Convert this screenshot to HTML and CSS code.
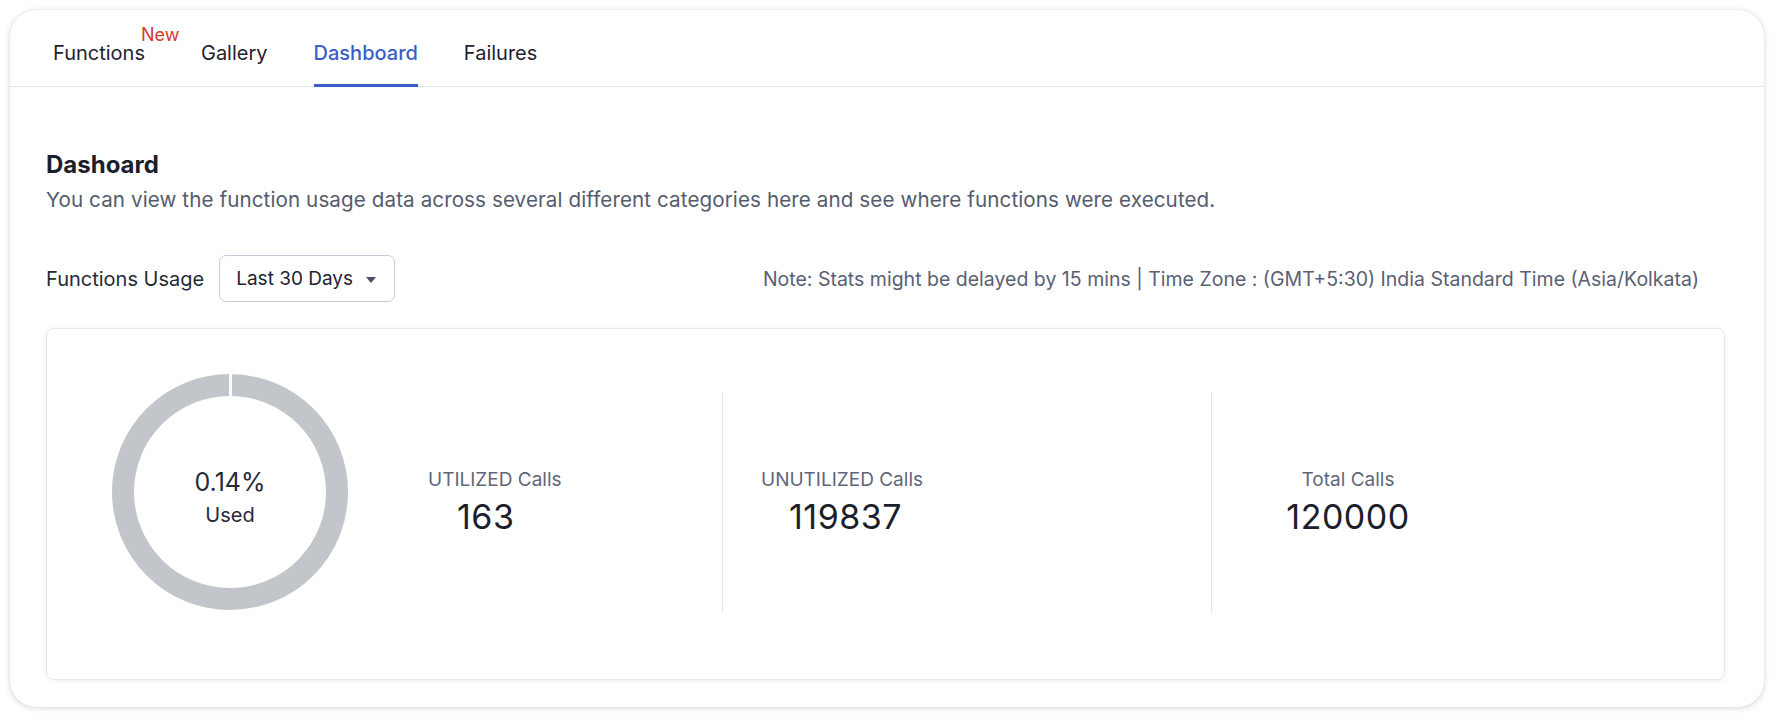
FILE: index.html
```html
<!DOCTYPE html>
<html lang="en">
<head>
<meta charset="utf-8">
<title>Functions Dashboard</title>
<link rel="stylesheet" href="styles.css">
</head>
<body>
<div class="frame">
  <nav class="tabs">
    <div class="tab tab-functions">Functions<span class="badge-new">New</span></div>
    <div class="tab">Gallery</div>
    <div class="tab active">Dashboard</div>
    <div class="tab">Failures</div>
  </nav>
  <main class="content">
    <h1 class="title">Dashoard</h1>
    <p class="desc">You can view the function usage data across several different categories here and see where functions were executed.</p>
    <div class="filter-row">
      <span class="filter-label">Functions Usage</span>
      <div class="dropdown"><span>Last 30 Days</span><span class="caret"></span></div>
      <span class="note">Note: Stats might be delayed by 15 mins | Time Zone : (GMT+5:30) India Standard Time (Asia/Kolkata)</span>
    </div>
    <section class="usage-card">
      <div class="donut">
        <svg class="donut-svg" width="236" height="236" viewBox="0 0 236 236">
          <circle cx="118" cy="118" r="107" fill="none" stroke="#c2c6cb" stroke-width="22"/>
          <rect x="117" y="0" width="3" height="24" fill="#ffffff"/>
        </svg>
        <div class="donut-text">
          <div class="donut-pct">0.14%</div>
          <div class="donut-used">Used</div>
        </div>
      </div>
      <div class="stat stat-1">
        <div class="stat-label">UTILIZED Calls</div>
        <div class="stat-value">163</div>
      </div>
      <div class="divider"></div>
      <div class="stat stat-2">
        <div class="stat-label">UNUTILIZED Calls</div>
        <div class="stat-value">119837</div>
      </div>
      <div class="divider"></div>
      <div class="stat stat-3">
        <div class="stat-label">Total Calls</div>
        <div class="stat-value">120000</div>
      </div>
    </section>
  </main>
</div>
</body>
</html>
```

FILE: styles.css
```css
* { box-sizing: border-box; }
html, body {
  margin: 0;
  padding: 0;
  background: #ffffff;
  font-family: Inter, "Noto Sans", "Liberation Sans", sans-serif;
  color: #1d2030;
}
.frame {
  margin: 10px 14px 14px 10px;
  height: 697px;
  background: #ffffff;
  border-radius: 26px;
  box-shadow: 0 1px 6px rgba(0,0,0,0.16), 0 0 1px rgba(0,0,0,0.12);
  overflow: hidden;
  display: flex;
  flex-direction: column;
}
.tabs {
  display: flex;
  gap: 46px;
  padding-left: 43px;
  border-bottom: 1px solid #e1e5f2;
  height: 77px;
}
.tab {
  position: relative;
  font-size: 20px;
  line-height: 24px;
  padding-top: 31px;
  padding-bottom: 19px;
  border-bottom: 3px solid transparent;
  height: 77px;
  color: #1f2230;
  white-space: nowrap;
}
.tab-functions { margin-right: 10px; }
.tab.active {
  color: #3a5ec9;
  border-bottom-color: #3a5ec9;
  font-weight: 500;
}
.badge-new {
  position: absolute;
  left: 88px;
  top: 14px;
  font-size: 18px;
  line-height: 22px;
  color: #d43a2e;
}
.content {
  padding: 63px 39px 27px 36px;
  display: flex;
  flex-direction: column;
}
.title {
  margin: 0;
  font-size: 24px;
  line-height: 30px;
  font-weight: 700;
  color: #1b1e2b;
}
.desc {
  margin: 6px 0 0;
  font-size: 20.6px;
  letter-spacing: 0.1px;
  line-height: 27px;
  color: #555b6d;
}
.filter-row {
  margin-top: 42px;
  display: flex;
  align-items: center;
  height: 47px;
  padding-right: 26px;
}
.filter-label {
  font-size: 20px;
  color: #262a37;
  margin-right: 15px;
}
.dropdown {
  width: 176px;
  height: 47px;
  border: 1px solid #c8ccd8;
  border-radius: 7px;
  padding: 0 18px 0 16px;
  display: flex;
  align-items: center;
  justify-content: space-between;
  font-size: 19px;
  color: #1f2230;
}
.caret {
  width: 0;
  height: 0;
  border-left: 5px solid transparent;
  border-right: 5px solid transparent;
  border-top: 6px solid #4b5061;
  margin-top: 2px;
}
.note {
  margin-left: auto;
  font-size: 19.5px;
  color: #5a6073;
  white-space: nowrap;
}
.usage-card {
  margin-top: 26px;
  height: 352px;
  border: 1px solid #e3e7f1;
  border-radius: 8px;
  box-shadow: 0 1px 5px rgba(40,60,120,0.08);
  display: flex;
  align-items: center;
  padding: 0 0 4px 65px;
}
.donut {
  width: 236px;
  height: 236px;
  margin-bottom: 20px;
  display: grid;
  place-items: center;
  flex: none;
}
.donut-svg, .donut-text { grid-area: 1 / 1; }
.donut-text {
  text-align: center;
  margin-top: 11px;
  color: #262a36;
}
.donut-pct { font-size: 25px; line-height: 30px; }
.donut-used { font-size: 20px; line-height: 26px; margin-top: 5px; }
.stat { flex: none; }
.stat-label {
  font-size: 19px;
  line-height: 24px;
  color: #60667a;
  white-space: nowrap;
}
.stat-value {
  font-size: 34px;
  letter-spacing: 0.5px;
  line-height: 40px;
  margin-top: 5px;
  color: #1c1f2b;
  white-space: nowrap;
}
.stat-1 { margin-left: 80px; width: 294px; }
.stat-1 .stat-value { padding-left: 29px; }
.stat-2 { margin-left: 38px; width: 450px; }
.stat-2 .stat-value { padding-left: 28px; }
.stat-3 { margin-left: 66px; width: 140px; text-align: center; }
.divider {
  flex: none;
  width: 1px;
  height: 221px;
  background: #e2e6ef;
}
```
